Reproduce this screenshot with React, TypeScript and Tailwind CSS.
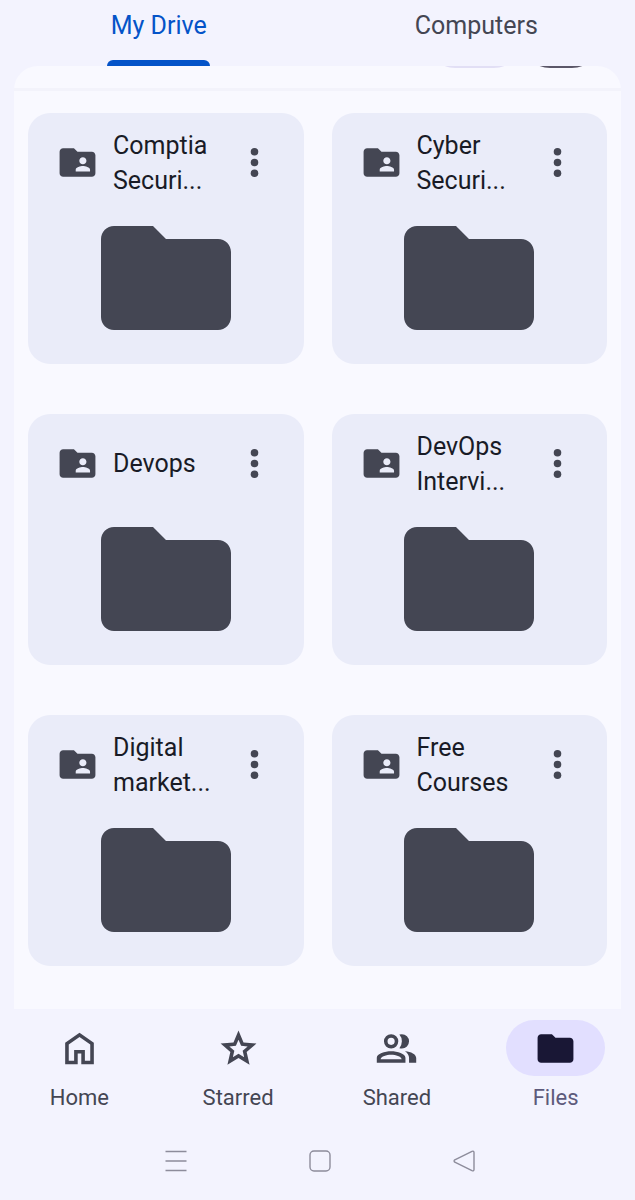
import React, { useState } from 'react';

interface Folder {
  id: string;
  lines: string[];
}

const folders: Folder[] = [
  { id: 'comptia', lines: ['Comptia', 'Securi...'] },
  { id: 'cyber', lines: ['Cyber', 'Securi...'] },
  { id: 'devops', lines: ['Devops'] },
  { id: 'interview', lines: ['DevOps', 'Intervi...'] },
  { id: 'digital', lines: ['Digital', 'market...'] },
  { id: 'courses', lines: ['Free', 'Courses'] },
];

const FOLDER_PATH = 'M10 4H4c-1.1 0-2 .9-2 2v12c0 1.1.9 2 2 2h16c1.1 0 2-.9 2-2V8c0-1.1-.9-2-2-2h-8l-2-2z';

const navItems = [
  {
    label: 'Home',
    path: 'M12 3.2 4 8.8v12h7v-6h2v6h7v-12L12 3.2zM6 18.8v-9l6-4.2 6 4.2v9h-3v-6H9v6H6z',
  },
  {
    label: 'Starred',
    path: 'm8.85 16.825 3.15-1.9 3.15 1.925-.825-3.6 2.775-2.4-3.65-.325-1.45-3.4-1.45 3.375-3.65.325 2.775 2.425-.825 3.575ZM5.825 21l1.625-7.025L2 9.25l7.2-.625L12 2l2.8 6.625 7.2.625-5.45 4.725L18.175 21 12 17.275 5.825 21Z',
  },
  {
    label: 'Shared',
    path: 'M1 20v-2.8c0-2.4 4.5-3.7 8-3.7s8 1.3 8 3.7V20H1zm2.1-2h11.8c-.4-1.6-3.2-2.5-5.9-2.5S3.5 16.4 3.1 18zM16.7 13.5c3.5.3 6.3 1.6 6.3 3.8V20h-4v-2.8c0-1.5-.9-2.8-2.3-3.7zM9 4a4 4 0 1 1 0 8 4 4 0 0 1 0-8zm0 2a2 2 0 1 0 0 4 2 2 0 0 0 0-4zM13.6 4.2q.7-.2 1.4-.2a4 4 0 0 1 0 8q-.7 0-1.4-.2Q15 10.200 15 8t-1.400-3.800z',
  },
  { label: 'Files', path: FOLDER_PATH },
];

const FolderCard: React.FC<{ folder: Folder }> = ({ folder }) => (
  <article className="rounded-[22px] bg-[#eaecf9] px-7 pt-[14px] pb-[34px] text-[#444653]">
    <div className="flex h-[71px] items-center">
      <svg viewBox="0 0 24 24" className="size-[43px] shrink-0" fill="currentColor">
        <path d="M20 6h-8l-2-2H4c-1.1 0-2 .9-2 2v12c0 1.1.9 2 2 2h16c1.1 0 2-.9 2-2V8c0-1.1-.9-2-2-2zm-5 3c1.1 0 2 .9 2 2s-.9 2-2 2-2-.9-2-2 .9-2 2-2zm4 8h-8v-1c0-1.33 2.67-2 4-2s4 .67 4 2v1z" />
      </svg>
      <h2 className="ml-[14px] min-w-0 flex-1 text-[25px] leading-[35px] text-[#191b26]">
        {folder.lines.map((line) => (
          <span key={line} className="block whitespace-nowrap">{line}</span>
        ))}
      </h2>
      <button aria-label="More actions" className="shrink-0">
        <svg viewBox="0 0 24 24" className="size-[43px]" fill="currentColor">
          <circle cx="12" cy="6" r="2.1" />
          <circle cx="12" cy="12" r="2.1" />
          <circle cx="12" cy="18" r="2.1" />
        </svg>
      </button>
    </div>
    <svg viewBox="2 4 20 16" className="mx-auto mt-7 h-[104px] w-[130px]" fill="currentColor">
      <path d={FOLDER_PATH} />
    </svg>
  </article>
);

const App: React.FC = () => {
  const [tab, setTab] = useState('My Drive');
  const [page, setPage] = useState('Files');

  return (
    <div className="flex min-h-screen flex-col bg-[#f3f3fe] font-['Roboto',sans-serif]">
      {/* Tabs */}
      <div className="grid grid-cols-2">
        {['My Drive', 'Computers'].map((name) => (
          <button
            key={name}
            onClick={() => setTab(name)}
            className={`flex flex-col items-center pt-2 text-[25px] leading-[35px] ${
              tab === name ? 'text-[#0453c8]' : 'text-[#444653]'
            }`}
          >
            <span>{name}</span>
            <span
              className={`mt-[17px] h-[6px] w-[103px] rounded-t-[6px] ${
                tab === name ? 'bg-[#0453c8]' : 'bg-transparent'
              }`}
            />
          </button>
        ))}
      </div>

      <main className="mx-[14px] flex-1 overflow-hidden rounded-t-[24px] bg-[#f9f9ff]">
        {/* Lower edge of the scrolled view switch */}
        <div className="flex h-[25px] items-start justify-end overflow-hidden border-b-[3px] border-[#f3f3fb] pr-[21px]">
          <span className="-mt-[54px] h-14 w-[95px] rounded-full bg-[#e2dff5]" />
          <span className="-mt-[54px] h-14 w-[78px] rounded-full bg-[#5b5768]" />
        </div>

        <div className="grid grid-cols-2 gap-x-7 gap-y-[50px] px-[14px] pt-[22px] pb-[43px]">
          {folders.map((folder) => (
            <FolderCard key={folder.id} folder={folder} />
          ))}
        </div>
      </main>

      {/* Bottom navigation */}
      <nav className="grid grid-cols-4 pt-[11px]">
        {navItems.map((item) => (
          <button
            key={item.label}
            onClick={() => setPage(item.label)}
            className={`flex flex-col items-center gap-1 text-[22px] leading-9 ${
              page === item.label ? 'text-[#5d5a7b]' : 'text-[#444653]'
            }`}
          >
            <span
              className={`flex h-14 w-[99px] items-center justify-center rounded-full ${
                page === item.label ? 'bg-[#e2dfff] text-[#191735]' : ''
              }`}
            >
              <svg viewBox="0 0 24 24" className="size-[43px]" fill="currentColor" fillRule="evenodd">
                <path d={item.path} />
              </svg>
            </span>
            <span>{item.label}</span>
          </button>
        ))}
      </nav>

      {/* System buttons */}
      <div className="flex items-center justify-center gap-[120px] pt-[33px] pb-[27px] pl-1 text-[#8d8c9b]">
        <button aria-label="Recent apps">
          <svg viewBox="0 0 24 24" className="size-6" fill="none" stroke="currentColor" strokeWidth="1.6">
            <path d="M1.5 2.5h21M1.5 12h21M1.5 21.5h21" />
          </svg>
        </button>
        <button aria-label="Home screen">
          <svg viewBox="0 0 24 24" className="size-6" fill="none" stroke="currentColor" strokeWidth="1.4">
            <rect x="2" y="2" width="20" height="20" rx="4" />
          </svg>
        </button>
        <button aria-label="Back">
          <svg viewBox="0 0 24 24" className="size-6" fill="none" stroke="currentColor" strokeWidth="1.4" strokeLinejoin="round">
            <path d="M2.8 10.8 20 2.3Q22 1.7 22 3.5v17Q22 22.3 20 21.7L2.8 13.2Q1.4 12 2.8 10.8z" />
          </svg>
        </button>
      </div>
    </div>
  );
};

export default App;
